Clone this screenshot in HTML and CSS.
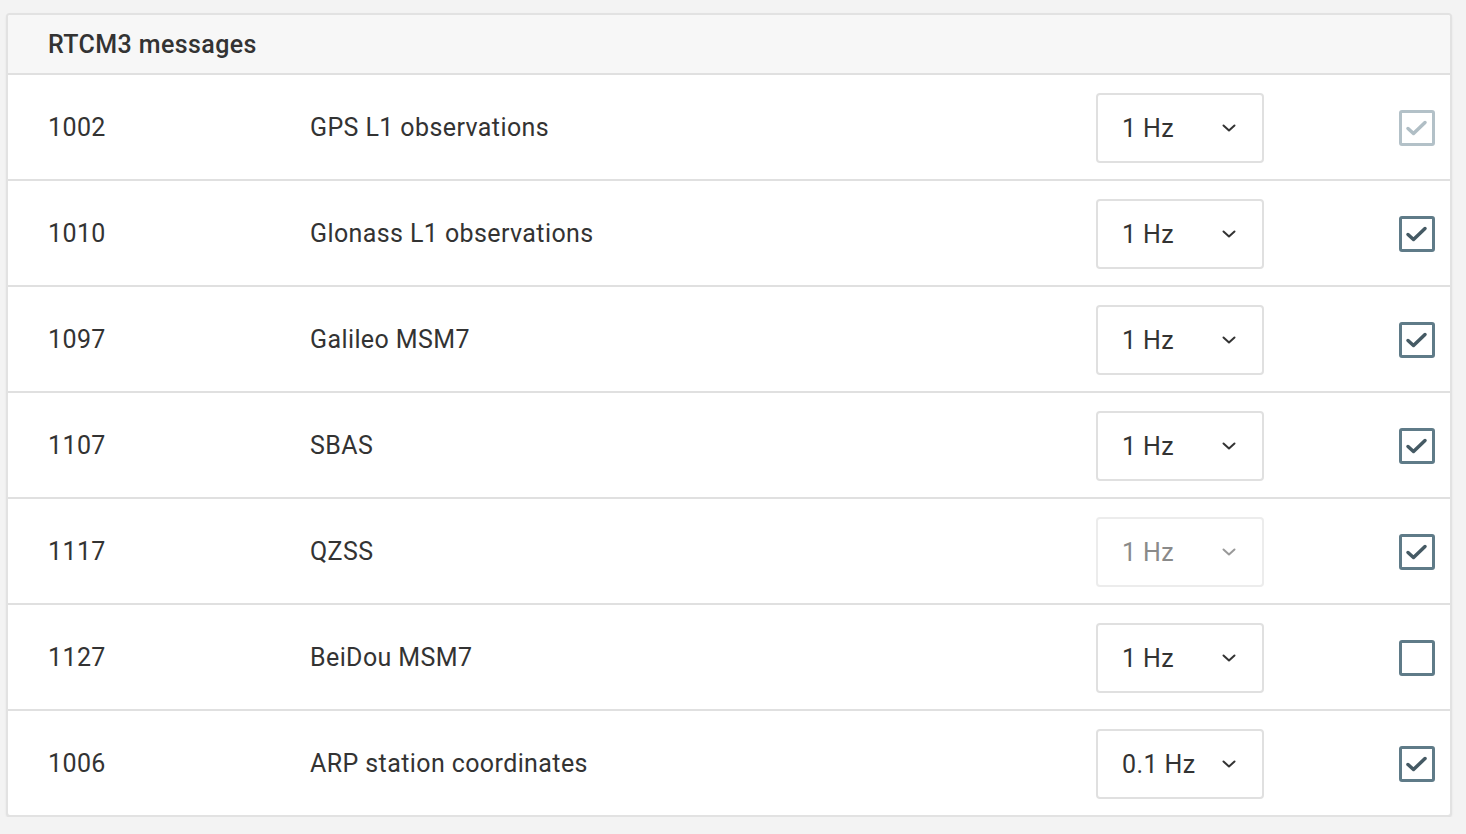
FILE: index.html
```html
<!DOCTYPE html>
<html>
<head>
<meta charset="utf-8">
<link rel="stylesheet" href="styles.css">
</head>
<body>
<div class="card">
  <div class="card-header">RTCM3 messages</div>
  <div class="row">
    <div class="code">1002</div>
    <div class="desc">GPS L1 observations</div>
    <div class="select"><span>1 Hz</span><svg class="chev" viewBox="0 0 14 8"><path d="M1.5 1.5 L7 6.5 L12.5 1.5"/></svg></div>
    <div class="check-cell"><span class="checkbox checked disabled"><svg viewBox="0 0 30 30"><path d="M6 15.5 L11.5 20.5 L23 9.5"/></svg></span></div>
  </div>
  <div class="row">
    <div class="code">1010</div>
    <div class="desc">Glonass L1 observations</div>
    <div class="select"><span>1 Hz</span><svg class="chev" viewBox="0 0 14 8"><path d="M1.5 1.5 L7 6.5 L12.5 1.5"/></svg></div>
    <div class="check-cell"><span class="checkbox checked"><svg viewBox="0 0 30 30"><path d="M6 15.5 L11.5 20.5 L23 9.5"/></svg></span></div>
  </div>
  <div class="row">
    <div class="code">1097</div>
    <div class="desc">Galileo MSM7</div>
    <div class="select"><span>1 Hz</span><svg class="chev" viewBox="0 0 14 8"><path d="M1.5 1.5 L7 6.5 L12.5 1.5"/></svg></div>
    <div class="check-cell"><span class="checkbox checked"><svg viewBox="0 0 30 30"><path d="M6 15.5 L11.5 20.5 L23 9.5"/></svg></span></div>
  </div>
  <div class="row">
    <div class="code">1107</div>
    <div class="desc">SBAS</div>
    <div class="select"><span>1 Hz</span><svg class="chev" viewBox="0 0 14 8"><path d="M1.5 1.5 L7 6.5 L12.5 1.5"/></svg></div>
    <div class="check-cell"><span class="checkbox checked"><svg viewBox="0 0 30 30"><path d="M6 15.5 L11.5 20.5 L23 9.5"/></svg></span></div>
  </div>
  <div class="row">
    <div class="code">1117</div>
    <div class="desc">QZSS</div>
    <div class="select disabled"><span>1 Hz</span><svg class="chev" viewBox="0 0 14 8"><path d="M1.5 1.5 L7 6.5 L12.5 1.5"/></svg></div>
    <div class="check-cell"><span class="checkbox checked"><svg viewBox="0 0 30 30"><path d="M6 15.5 L11.5 20.5 L23 9.5"/></svg></span></div>
  </div>
  <div class="row">
    <div class="code">1127</div>
    <div class="desc">BeiDou MSM7</div>
    <div class="select"><span>1 Hz</span><svg class="chev" viewBox="0 0 14 8"><path d="M1.5 1.5 L7 6.5 L12.5 1.5"/></svg></div>
    <div class="check-cell"><span class="checkbox"></span></div>
  </div>
  <div class="row last">
    <div class="code">1006</div>
    <div class="desc">ARP station coordinates</div>
    <div class="select"><span>0.1 Hz</span><svg class="chev" viewBox="0 0 14 8"><path d="M1.5 1.5 L7 6.5 L12.5 1.5"/></svg></div>
    <div class="check-cell"><span class="checkbox checked"><svg viewBox="0 0 30 30"><path d="M6 15.5 L11.5 20.5 L23 9.5"/></svg></span></div>
  </div>
</div>
</body>
</html>
```
FILE: styles.css
```css
html, body {
  margin: 0;
  padding: 0;
  background: #f3f3f3;
}
body {
  padding: 13px 14px 0 6px;
  font-family: Roboto, "Liberation Sans", Arial, sans-serif;
  color: #333;
  font-size: 25px;
  letter-spacing: 0.4px;
}
.card {
  width: 1446px;
  box-sizing: border-box;
  background: #fff;
  border: 2px solid #e2e2e2;
  border-radius: 4px;
  box-shadow: 0 1px 2px rgba(0,0,0,0.08);
  overflow: hidden;
}
.card-header {
  height: 58px;
  display: flex;
  align-items: center;
  padding-left: 40px;
  background: #f7f7f7;
  border-bottom: 2px solid #e0e0e0;
  font-weight: 500;
  color: #333;
}
.row {
  display: grid;
  grid-template-columns: 262px 1fr 168px 171px;
  align-items: center;
  height: 104px;
  padding: 0 15px 0 40px;
  border-bottom: 2px solid #e0e0e0;
}
.row.last {
  border-bottom: none;
}
.code, .desc {
  color: #333;
}
.select {
  height: 70px;
  box-sizing: border-box;
  border: 2px solid #e0e0e0;
  border-radius: 4px;
  display: flex;
  align-items: center;
  justify-content: space-between;
  padding: 0 26px 0 24px;
  color: #333;
  margin-top: 2px;
}
.select .chev {
  width: 14px;
  height: 8px;
  fill: none;
  stroke: #333;
  stroke-width: 2;
  stroke-linecap: round;
  stroke-linejoin: round;
}
.select.disabled {
  color: #8a8a8a;
  border-color: #ececec;
}
.select.disabled .chev {
  stroke: #999;
}
.check-cell {
  display: flex;
  justify-content: flex-end;
}
.checkbox {
  width: 36px;
  height: 36px;
  box-sizing: border-box;
  border: 3px solid #5f7b88;
  border-radius: 3px;
  display: flex;
  align-items: center;
  justify-content: center;
  margin-top: 2px;
}
.checkbox svg {
  width: 30px;
  height: 30px;
  fill: none;
  stroke: #455a64;
  stroke-width: 3.5;
  stroke-linecap: round;
  stroke-linejoin: round;
}
.checkbox.disabled {
  border-color: #b3c1c8;
}
.checkbox.disabled svg {
  stroke: #b0bec5;
}
```
